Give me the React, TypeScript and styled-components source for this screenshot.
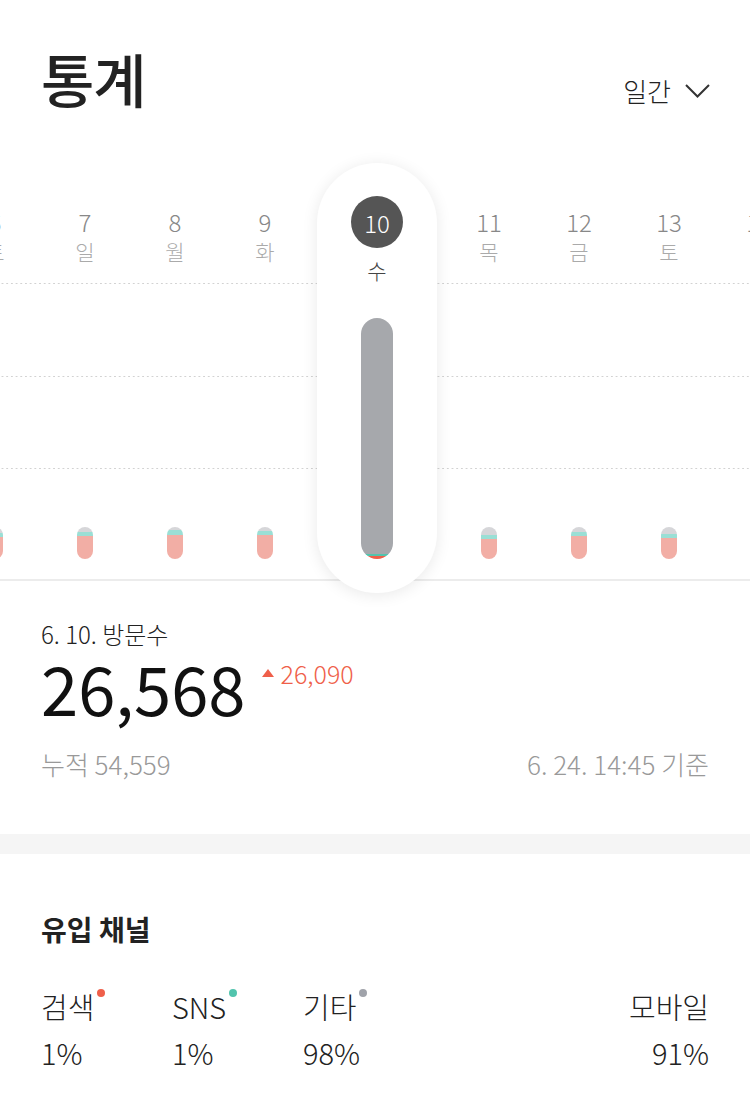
import React from "react";
import styled, { createGlobalStyle } from "styled-components";

const GlobalStyle = createGlobalStyle`
  body {
    margin: 0;
    background: #fff;
    overflow-x: hidden;
    font-family: "Noto Sans CJK KR", "Noto Sans", sans-serif;
    color: #222;
  }
`;

const Page = styled.div`
  width: 750px;
  overflow: hidden;
`;

const Header = styled.header`
  display: flex;
  justify-content: space-between;
  align-items: flex-end;
  padding: 48px 40px 0 41px;
`;

const Title = styled.h1`
  margin: 0;
  font-size: 58px;
  line-height: 60px;
  font-weight: 500;
  color: #222;
  letter-spacing: -1px;
`;

const PeriodButton = styled.button`
  display: flex;
  align-items: center;
  gap: 14px;
  border: none;
  background: none;
  padding: 0;
  margin-bottom: 1px;
  font-family: inherit;
  font-size: 26px;
  line-height: 32px;
  font-weight: 300;
  color: #222;
`;

const ChartViewport = styled.div`
  overflow: hidden;
  padding: 55px 0 26px;
`;

const Strip = styled.div`
  display: flex;
  height: 416px;
  margin-left: -50px;
  border-bottom: 2px solid #ececec;
  background-image: linear-gradient(to right, #d2d2d2 1.5px, transparent 1.5px),
    linear-gradient(to right, #d2d2d2 1.5px, transparent 1.5px),
    linear-gradient(to right, #d2d2d2 1.5px, transparent 1.5px);
  background-size: 4.7px 1px;
  background-repeat: repeat-x;
  background-position: 0 120px, 0 213px, 0 305px;
`;

const DayColumn = styled.div`
  flex: 0 0 90px;
  display: flex;
  flex-direction: column;
  align-items: center;
  padding: 44px 0 20px;
`;

const SelectedColumn = styled.div`
  flex: 0 0 134px;
  display: flex;
  justify-content: center;
`;

const Pill = styled.div`
  width: 120px;
  margin-bottom: -14px;
  border-radius: 60px;
  background: #fff;
  box-shadow: 0 2px 16px rgba(0, 0, 0, 0.09);
  display: flex;
  flex-direction: column;
  align-items: center;
  padding: 33px 0 34px;
  box-sizing: border-box;
`;

const DayNumber = styled.div`
  font-size: 24px;
  line-height: 30px;
  font-weight: 300;
  color: #888;
`;

const Weekday = styled.div<{ $dark?: boolean }>`
  font-size: 21px;
  line-height: 28px;
  font-weight: 300;
  color: ${({ $dark }) => ($dark ? "#444" : "#aaa")};
  margin-top: ${({ $dark }) => ($dark ? "8px" : "0")};
`;

const DayCircle = styled.div`
  width: 52px;
  height: 52px;
  border-radius: 50%;
  background: #555;
  color: #fff;
  display: flex;
  align-items: center;
  justify-content: center;
  font-size: 24px;
  font-weight: 300;
`;

const Spacer = styled.div`
  flex: 1;
`;

const Bar = styled.div<{ $wide?: boolean }>`
  width: ${({ $wide }) => ($wide ? "32px" : "16px")};
  height: ${({ $wide }) => ($wide ? "241px" : "32px")};
  border-radius: ${({ $wide }) => ($wide ? "16px" : "8px")};
  overflow: hidden;
  display: flex;
  flex-direction: column;
`;

const Segment = styled.div<{ $color: string; $h?: number }>`
  background: ${({ $color }) => $color};
  flex: ${({ $h }) => ($h === undefined ? "1" : `0 0 ${$h}px`)};
`;

const Stats = styled.section`
  padding: 12px 41px 55px;
`;

const DateLabel = styled.div`
  font-size: 24px;
  line-height: 30px;
  font-weight: 300;
  color: #222;
`;

const BigRow = styled.div`
  display: flex;
  align-items: flex-start;
  gap: 16px;
  margin-top: 3px;
`;

const BigNumber = styled.div`
  font-size: 67px;
  line-height: 70px;
  font-weight: 400;
  color: #111;
`;

const Delta = styled.div`
  display: flex;
  align-items: center;
  gap: 7px;
  margin-top: 6px;
  font-size: 25px;
  line-height: 30px;
  font-weight: 300;
  color: #ef5f4a;
`;

const Triangle = styled.span`
  width: 0;
  height: 0;
  border-left: 6px solid transparent;
  border-right: 6px solid transparent;
  border-bottom: 8px solid #ef5f4a;
`;

const FootRow = styled.div`
  display: flex;
  justify-content: space-between;
  margin-top: 27px;
  font-size: 26px;
  line-height: 30px;
  font-weight: 300;
  color: #999;
`;

const Band = styled.div`
  height: 20px;
  background: #f5f5f5;
`;

const Channels = styled.section`
  padding: 57px 41px 40px;
`;

const SectionTitle = styled.h2`
  margin: 0;
  font-size: 28px;
  line-height: 36px;
  font-weight: 700;
  color: #222;
`;

const ChannelRow = styled.div`
  display: flex;
  margin-top: 36px;
`;

const Channel = styled.div<{ $right?: boolean }>`
  width: 131px;
  margin-left: ${({ $right }) => ($right ? "auto" : "0")};
  text-align: ${({ $right }) => ($right ? "right" : "left")};
  font-size: 29px;
  line-height: 46px;
  font-weight: 300;
  color: #222;
`;

const Dot = styled.span<{ $color: string }>`
  display: inline-block;
  width: 8px;
  height: 8px;
  border-radius: 50%;
  margin-left: 3px;
  vertical-align: top;
  margin-top: 6px;
  background: ${({ $color }) => $color};
`;

const GRAY = "#d6d6d9";
const TEAL = "#9adfd5";
const SALMON = "#f2aea5";

const days = [
  { d: 6, w: "토", g: 6, t: 4 },
  { d: 7, w: "일", g: 5, t: 4 },
  { d: 8, w: "월", g: 3, t: 5 },
  { d: 9, w: "화", g: 4, t: 4 },
  { d: 10, w: "수", selected: true, g: 0, t: 0 },
  { d: 11, w: "목", g: 8, t: 4 },
  { d: 12, w: "금", g: 5, t: 4 },
  { d: 13, w: "토", g: 7, t: 4 },
  { d: 14, w: "일", g: 5, t: 4 },
];

const channels = [
  { label: "검색", value: "1%", color: "#ef5f4a" },
  { label: "SNS", value: "1%", color: "#52c4ad" },
  { label: "기타", value: "98%", color: "#a0a3aa" },
];

const Chevron = () => (
  <svg width="25" height="14" viewBox="0 0 25 14" fill="none">
    <polyline points="1,1 12.5,12.5 24,1" stroke="#333" strokeWidth="2" />
  </svg>
);

const App: React.FC = () => {
  return (
    <Page>
      <GlobalStyle />
      <Header>
        <Title>통계</Title>
        <PeriodButton>
          일간 <Chevron />
        </PeriodButton>
      </Header>

      <ChartViewport>
        <Strip>
          {days.map((day) =>
            day.selected ? (
              <SelectedColumn key={day.d}>
                <Pill>
                  <DayCircle>{day.d}</DayCircle>
                  <Weekday $dark>{day.w}</Weekday>
                  <Spacer />
                  <Bar $wide>
                    <Segment $color="#a6a8ac" />
                    <Segment $color="#52c4ad" $h={2} />
                    <Segment $color="#ef5f4a" $h={3} />
                  </Bar>
                </Pill>
              </SelectedColumn>
            ) : (
              <DayColumn key={day.d}>
                <DayNumber>{day.d}</DayNumber>
                <Weekday>{day.w}</Weekday>
                <Spacer />
                <Bar>
                  <Segment $color={GRAY} $h={day.g} />
                  <Segment $color={TEAL} $h={day.t} />
                  <Segment $color={SALMON} />
                </Bar>
              </DayColumn>
            )
          )}
        </Strip>
      </ChartViewport>

      <Stats>
        <DateLabel>6. 10. 방문수</DateLabel>
        <BigRow>
          <BigNumber>26,568</BigNumber>
          <Delta>
            <Triangle />
            26,090
          </Delta>
        </BigRow>
        <FootRow>
          <span>누적 54,559</span>
          <span>6. 24. 14:45 기준</span>
        </FootRow>
      </Stats>

      <Band />

      <Channels>
        <SectionTitle>유입 채널</SectionTitle>
        <ChannelRow>
          {channels.map((c) => (
            <Channel key={c.label}>
              <div>
                {c.label}
                <Dot $color={c.color} />
              </div>
              <div>{c.value}</div>
            </Channel>
          ))}
          <Channel $right>
            <div>모바일</div>
            <div>91%</div>
          </Channel>
        </ChannelRow>
      </Channels>
    </Page>
  );
};

export default App;
